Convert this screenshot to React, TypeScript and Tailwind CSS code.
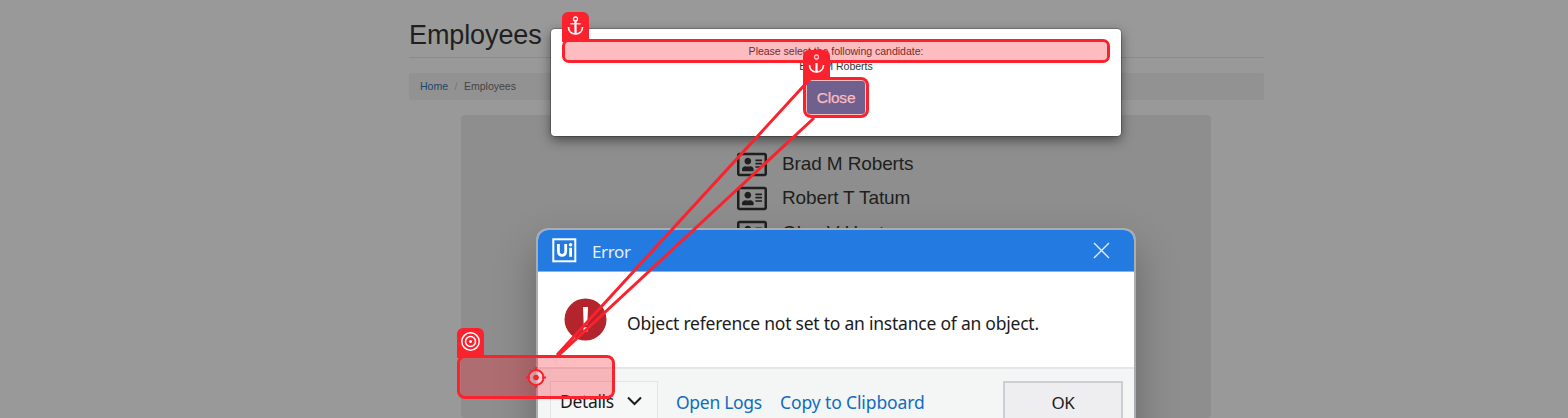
import React from "react";
import { FaRegAddressCard } from "react-icons/fa";

const people = ["Brad M Roberts", "Robert T Tatum", "Glen V Hunter"];

function Anchor() {
  return (
    <svg width="27" height="29" viewBox="0 0 27 29" fill="none" stroke="#fff" strokeWidth="1.7">
      <circle cx="13.5" cy="7" r="2" strokeWidth="1.3" />
      <path d="M13.5 9.2V22.3" strokeWidth="2.2" />
      <path d="M8.3 11.8H18.7" strokeWidth="1.2" />
      <path d="M6.5 15C6.5 19.5 9.5 22 13.5 22S20.5 19.5 20.5 15" />
    </svg>
  );
}

function TargetRings() {
  return (
    <svg width="27" height="28" viewBox="0 0 27 28" fill="none" stroke="#fff">
      <circle cx="13.5" cy="13.5" r="8.7" strokeWidth="1.5" />
      <circle cx="13.5" cy="13.5" r="5" strokeWidth="1.5" />
      <circle cx="13.5" cy="13.5" r="1.5" fill="#fff" stroke="none" />
    </svg>
  );
}

function EmployeesPage() {
  return (
    <main className="ml-[409px] w-[855px] text-[#1f1f1f]">
      <h1 className="h-[57px] pt-[18px] text-[27px] leading-[35px] tracking-[-0.1px]">Employees</h1>
      <hr className="border-t border-[#8b8b8b]" />
      <nav className="mt-[15px] flex h-[27px] items-center rounded-[3px] bg-[#929292] px-[11px] text-[10.6px] tracking-[-0.05px]">
        <span className="text-[#1c4668]">Home</span>
        <span className="px-[6.5px] text-[#777]">/</span>
        <span className="text-[#444]">Employees</span>
      </nav>
      <section className="ml-[52px] mt-[15px] h-[303px] w-[750px] rounded-[4px] bg-[#8e8e8e] pt-[32px]">
        {people.map((name) => (
          <div key={name} className="flex h-[34.3px] items-center pl-[276px]">
            <FaRegAddressCard className="h-[27px] w-[30px]" />
            <span className="ml-[15px] text-[19px] leading-[24px] tracking-[-0.12px]">{name}</span>
          </div>
        ))}
      </section>
    </main>
  );
}

function CandidateModal() {
  return (
    <div className="absolute left-[551px] top-[29px] flex h-[107px] w-[570px] flex-col items-center rounded-[4px] bg-white pt-[15px] text-[10.6px] leading-[15px] tracking-[-0.05px] text-[#333] shadow-[0_4px_12px_rgba(0,0,0,0.5),0_0_0_1px_rgba(0,0,0,0.2)]">
      <p>Please select the following candidate:</p>
      <p>Brad M Roberts</p>
      <div className="mt-[7px] h-[33px] w-[58px] rounded-[3px] bg-[#337ab7]" />
    </div>
  );
}

function ErrorDialog() {
  return (
    <div className="absolute left-[536px] top-[228px] h-[190px] w-[600px] overflow-hidden rounded-t-[12px] border-x-2 border-t-2 border-[#aaacaf] bg-white font-['Noto_Sans','Open_Sans',sans-serif] text-[#1b1b1b]">
      <header className="flex h-[42px] items-center border-b border-[#80b3f0] bg-[#237ae0] pl-[14px] pr-[24px] text-white">
        <svg width="25" height="25" viewBox="0 0 25 25" fill="none" stroke="#fff">
          <rect x="1.3" y="1.3" width="22" height="22" strokeWidth="2" />
          <path d="M6.4 6V13.3C6.4 18.8 13.7 18.8 13.7 13.3V6" strokeWidth="2.8" />
          <path d="M18.6 9.8V18.8" strokeWidth="2.8" />
          <circle cx="18.6" cy="6.8" r="1.8" fill="#fff" stroke="none" />
        </svg>
        <span className="ml-[15px] mt-[2px] text-[17px] tracking-[-0.35px] text-[#e3effc]">Error</span>
        <svg className="ml-auto" width="17" height="17" viewBox="0 0 17 17" stroke="#e3effc" strokeWidth="1.4">
          <path d="M1 1L16 16M16 1L1 16" />
        </svg>
      </header>
      <div className="flex h-[95px] items-start pl-[26px] pt-[26px]">
        <svg width="43" height="43" viewBox="0 0 43 43">
          <circle cx="21.5" cy="21.5" r="21" fill="#b4242c" />
          <path d="M19 9H24L23.3 27H19.7Z" fill="#fff" />
          <rect x="19.4" y="29.3" width="4.2" height="4.2" fill="#fff" />
        </svg>
        <span className="ml-[20px] mt-[12px] w-[415px] whitespace-nowrap text-[17.5px] leading-[26px] tracking-[-0.23px]">
          Object reference not set to an instance of an object.
        </span>
      </div>
      <footer className="flex h-[51px] border-t-2 border-[#e5e6e8] bg-[#f4f6f6] px-[11px] pt-[12px] text-[17.5px] leading-[39px]">
        <div className="ml-px flex h-[42px] w-[108px] border border-[#e3e5e7] bg-[#f6f8f8] pl-[9px]">
          <span className="w-[54px] tracking-[-0.35px]">Details</span>
          <svg className="ml-[13px] mt-[14px]" width="15" height="10" viewBox="0 0 15 10" fill="none" stroke="#1b1b1b" strokeWidth="2">
            <path d="M1 1.5L7.5 8L14 1.5" />
          </svg>
        </div>
        <span className="ml-[18px] mt-[2px] w-[86px] whitespace-nowrap tracking-[-0.3px] text-[#106cc0]">Open Logs</span>
        <span className="ml-[18px] mt-[2px] whitespace-nowrap tracking-[-0.12px] text-[#106cc0]">Copy to Clipboard</span>
        <button className="ml-auto h-[42px] w-[120px] border-2 border-[#cccfd2] bg-[#eeeef0] text-[17px] tracking-[-0.3px]">OK</button>
      </footer>
    </div>
  );
}

function Highlights() {
  return (
    <>
      <div className="absolute left-[803px] top-[50px] h-[36px] w-[27px] rounded-t-[6px] bg-[#fa222d]"><Anchor /></div>
      <div className="absolute left-[803px] top-[77px] h-[41px] w-[66px] rounded-[8px] bg-[#fa222d]">
        <div className="m-[3px] flex h-[35px] w-[60px] items-center justify-center rounded-[5px] bg-[#fcbcc0] p-px">
          <span className="flex h-[33px] w-[58px] items-center justify-center rounded-[3px] bg-[#6f608e] pt-px text-[15.5px] tracking-[-0.2px] text-[#fcbcc0] [-webkit-text-stroke:0.25px_#fcbcc0]">Close</span>
        </div>
      </div>
      <div className="absolute left-[562px] top-[39px] h-[24px] w-[548px] rounded-[7px] border-[3px] border-[#fa222d] bg-[#fa222d]/30 bg-clip-padding" />
      <div className="absolute left-[562px] top-[12px] h-[30px] w-[27px] rounded-t-[6px] bg-[#fa222d]"><Anchor /></div>
      <div className="absolute left-[457px] top-[355px] h-[44px] w-[158px] rounded-[8px] border-[3px] border-[#fa222d] bg-[#fa222d]/30 bg-clip-padding" />
      <div className="absolute left-[457px] top-[328px] h-[30px] w-[27px] rounded-t-[6px] bg-[#fa222d]"><TargetRings /></div>
      <svg className="absolute inset-0" width="1568" height="418" fill="none" stroke="#fa222d">
        <path d="M810 79L557 355M814 118L559 355" strokeWidth="3" />
        <circle cx="536" cy="377.5" r="7.5" strokeWidth="2" fill="#fff" fillOpacity="0.4" />
        <path d="M536 367V371M536 384V388M526 377.5H530M542 377.5H546" strokeWidth="2" />
        <circle cx="536" cy="377.5" r="2.8" fill="#fa222d" stroke="none" />
      </svg>
    </>
  );
}

export default function App() {
  return (
    <div className="relative h-[418px] w-[1568px] overflow-hidden bg-[#999] font-['Liberation_Sans',Arial,sans-serif]">
      <EmployeesPage />
      <CandidateModal />
      <div className="absolute left-[536px] top-[228px] h-[240px] w-[600px] rounded-[12px] shadow-[0_18px_40px_rgba(0,0,0,0.28)]" />
      <ErrorDialog />
      <Highlights />
    </div>
  );
}
